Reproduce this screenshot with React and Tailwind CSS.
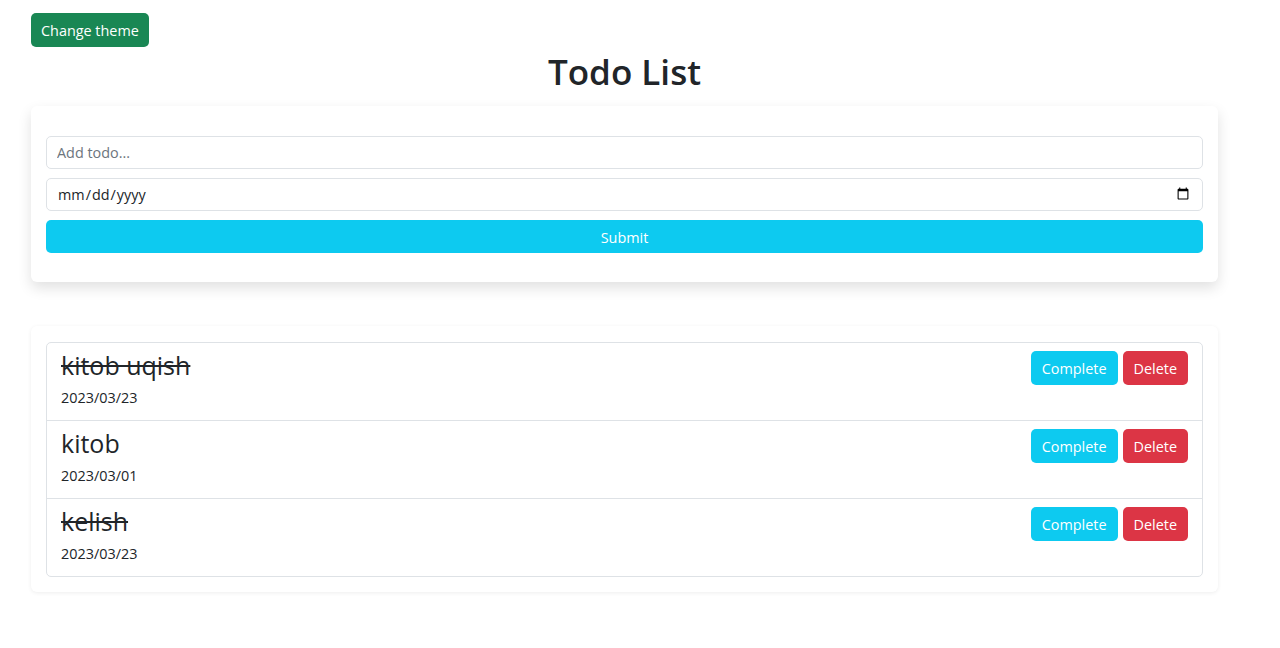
import { useState } from "react"

const todos = [
  { id: 1, title: "kitob uqish", date: "2023/03/23", done: true },
  { id: 2, title: "kitob", date: "2023/03/01", done: false },
  { id: 3, title: "kelish", date: "2023/03/23", done: true },
]

const TodoItem = ({ todo }) => (
  <li className="flex justify-between border-b border-[#dee2e6] last:border-b-0 px-[14px] pt-[7px] pb-[11px]">
    <div>
      <h3
        className={
          "text-[25px] leading-[30px] font-medium text-[#212529] mb-[7px] " +
          (todo.done ? "line-through" : "")
        }
      >
        {todo.title}
      </h3>
      <p className="text-[14.4px] leading-[22px] text-[#212529]">{todo.date}</p>
    </div>
    <div className="flex items-start gap-[5px] pt-px">
      <button className="h-[34px] pt-[2px] px-[11px] rounded-[5px] bg-[#0dcaf0] text-white text-[14.4px]">
        Complete
      </button>
      <button className="h-[34px] pt-[2px] px-[11px] rounded-[5px] bg-[#dc3545] text-white text-[14.4px]">
        Delete
      </button>
    </div>
  </li>
)

export default function App() {
  const [value, setValue] = useState("")

  return (
    <div
      className="min-h-[648px] bg-white text-[#212529] pt-[13px]"
      style={{ fontFamily: '"Open Sans", "Noto Sans", sans-serif' }}
    >
      <div className="ml-[31px] w-[1187px]">
        {/* theme toggle */}
        <button className="h-[34px] pt-[2px] px-[10px] rounded-[5px] bg-[#198754] text-white text-[14.4px]">
          Change theme
        </button>

        <h1 className="text-center text-[35px] leading-[43px] font-semibold mt-[3px] mb-[13px]">
          Todo List
        </h1>

        {/* form card */}
        <div className="bg-white rounded-[6px] shadow-[0_6px_14px_rgba(0,0,0,0.12)] px-[15px] pt-[30px] pb-[29px]">
          <form className="flex flex-col gap-[9px]" onSubmit={(e) => e.preventDefault()}>
            <input
              value={value}
              onChange={(e) => setValue(e.target.value)}
              placeholder="Add todo..."
              className="h-[33px] w-full rounded-[5px] border border-[#dee2e6] px-[10px] text-[14.4px] text-[#212529] placeholder:text-[#6c757d] outline-none"
            />
            <input
              type="date"
              className="h-[33px] w-full rounded-[5px] border border-[#dee2e6] px-[10px] text-[14.4px] text-[#212529] outline-none"
            />
            <button
              type="submit"
              className="h-[33px] pt-[2px] w-full rounded-[5px] bg-[#0dcaf0] text-white text-[14.4px]"
            >
              Submit
            </button>
          </form>
        </div>

        {/* list card */}
        <div className="mt-[44px] bg-white rounded-[6px] shadow-[0_1px_4px_rgba(0,0,0,0.07)] px-[15px] pt-[16px] pb-[15px]">
          <ul className="border border-[#dee2e6] rounded-[5px]">
            {todos.map((t) => (
              <TodoItem key={t.id} todo={t} />
            ))}
          </ul>
        </div>
      </div>
    </div>
  )
}
